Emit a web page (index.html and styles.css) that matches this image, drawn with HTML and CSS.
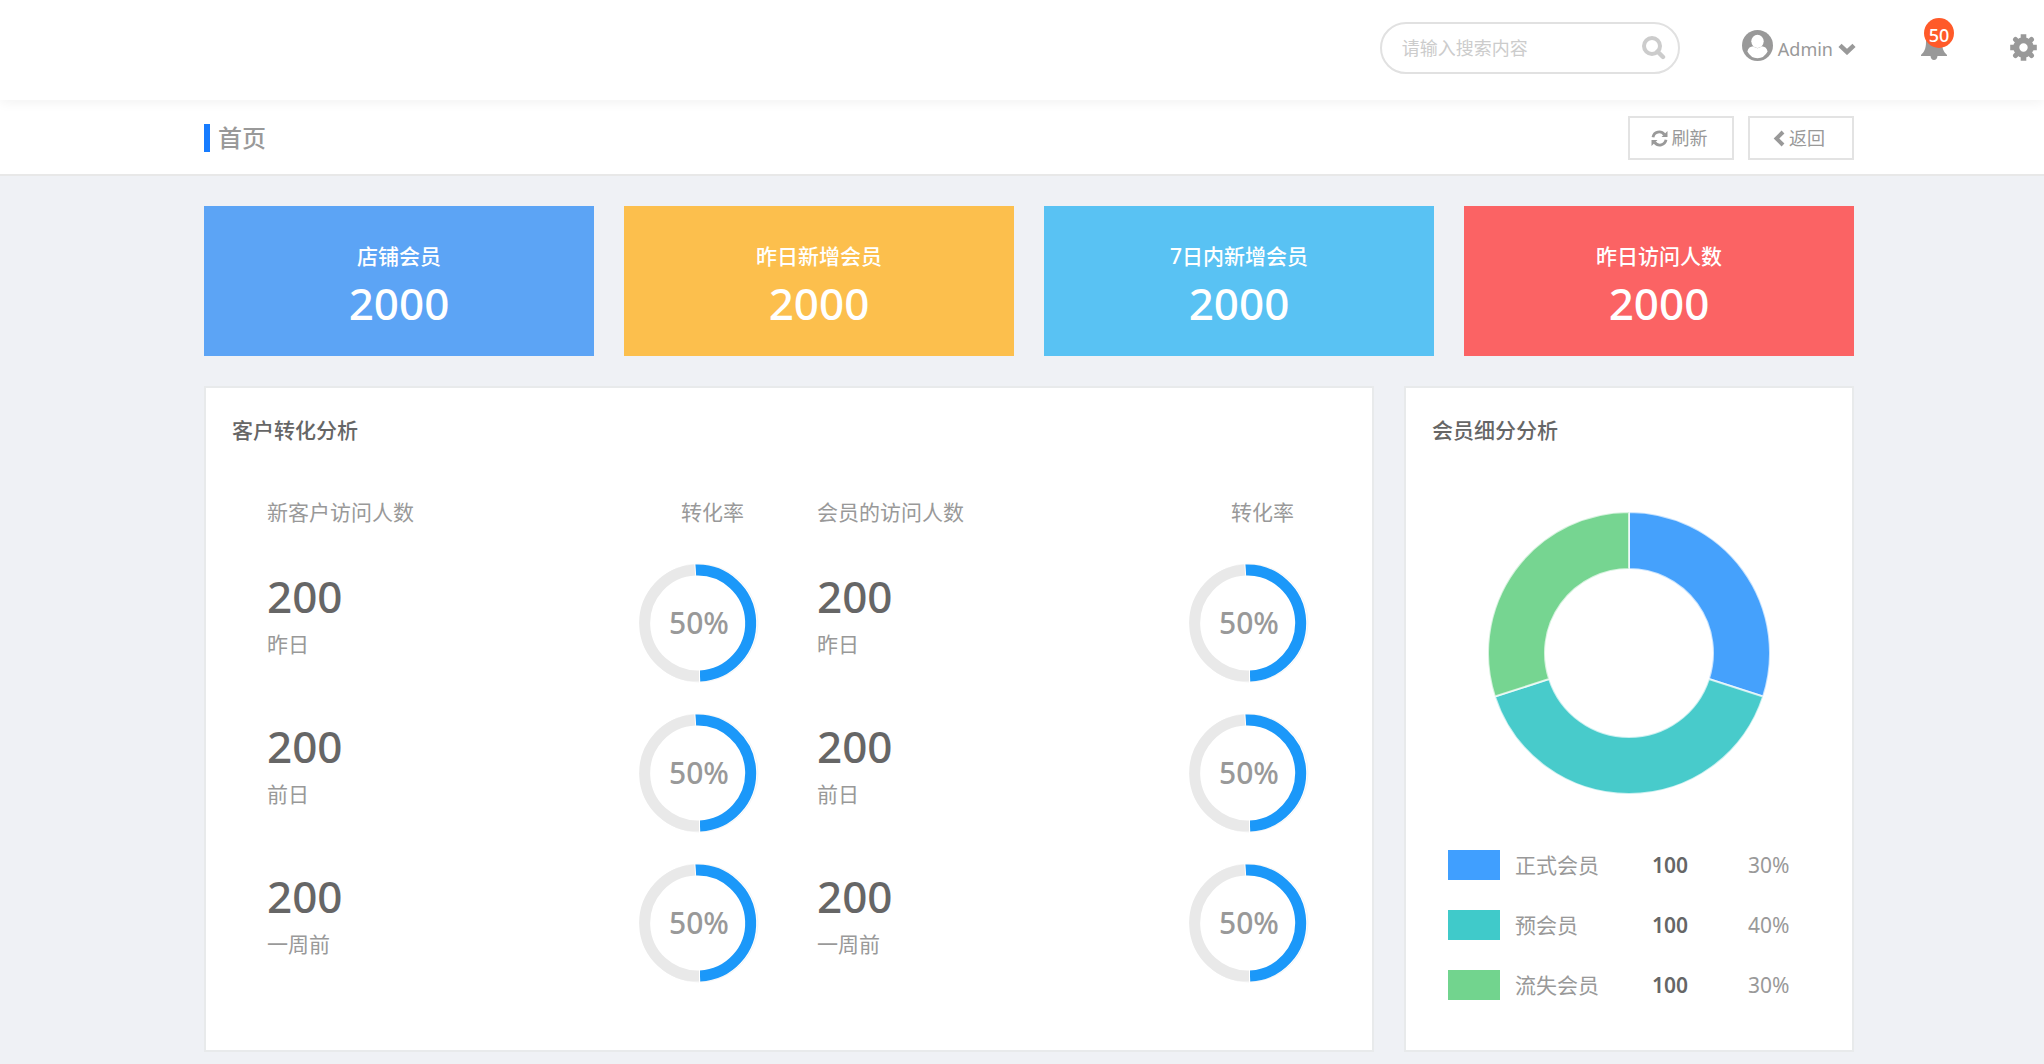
FILE: index.html
```html
<!DOCTYPE html>
<html lang="zh-CN">
<head>
<meta charset="utf-8">
<title>首页</title>
<link rel="stylesheet" href="styles.css">
</head>
<body>
<svg class="defs" aria-hidden="true">
  <symbol id="ring" viewBox="0 0 120 120">
    <circle cx="60" cy="60" r="59" fill="none" stroke="#f5f5f5" stroke-width="1"/>
    <path d="M61 113A53 53 0 0 1 56.300 7.100" fill="none" stroke="#e9e9e9" stroke-width="11"/>
    <path d="M56.300 7.100A53 53 0 1 1 61 113" fill="none" stroke="#1b98f9" stroke-width="11"/>
    <path d="M55.800 0.500L56.700 13M60.500 107V120" stroke="#fff" stroke-width="1"/>
  </symbol>
</svg>
<header class="topbar">
  <form class="search" role="search">
    <input class="search-input" type="search" placeholder="请输入搜索内容" aria-label="搜索">
    <button class="icon-button" type="button" aria-label="搜索">
      <svg width="24" height="24" viewBox="0 0 24 24" fill="none" stroke="#ccc"><circle cx="10" cy="10" r="8" stroke-width="4"/><path d="M15.500 15.500L21 21" stroke-width="4.400" stroke-linecap="round"/></svg>
    </button>
  </form>
  <button class="icon-button user" type="button">
    <svg class="avatar" width="31" height="31" viewBox="0 0 31 31"><circle cx="15.500" cy="15.500" r="15.500" fill="#999"/><path d="M5.400 21.500C6 18 8.500 16.300 11.300 16.200Q15.500 20.300 19.700 16.200C22.500 16.300 25 18 25.600 21.500Q22 28.300 15.500 28.300T5.400 21.500Z" fill="#fff"/><ellipse cx="15.500" cy="11.300" rx="6.200" ry="6.600" fill="#fff"/></svg>
    <span>Admin</span>
    <svg width="18" height="12" viewBox="0 0 18 12" fill="none" stroke="#999" stroke-width="4.500"><path d="M2 2.300L9 9L16 2.300"/></svg>
  </button>
  <button class="icon-button bell" type="button" aria-label="通知">
    <svg width="26" height="30" viewBox="0 0 26 30" fill="#999"><path d="M13 2C7 2 5 7 5 12C5 19 3 22 0 25V26H9.500Q10 30 13 30T16.500 26H26V25C23 22 21 19 21 12C21 7 19 2 13 2Z"/></svg>
    <span class="badge">50</span>
  </button>
  <button class="icon-button gear" type="button" aria-label="设置">
    <svg width="27" height="27" viewBox="-13.500 -13.500 27 27"><g stroke="#999" stroke-width="5.600"><path d="M0-13.300V-7M0 13.300V7M-13.300 0H-7M13.300 0H7"/><path d="M-8-8L-5-5M8 8L5 5M-8 8L-5 5M8-8L5-5" stroke-linecap="round" stroke-width="5"/></g><circle r="7.200" fill="none" stroke="#999" stroke-width="6"/></svg>
  </button>
</header>
<div class="pagebar">
  <h1 class="page-title">首页</h1>
  <div class="actions">
    <button class="action" type="button">
      <svg width="17" height="17" viewBox="0 0 17 17" fill="none" stroke="#999" stroke-width="2.800"><path d="M2 7.200A6.300 6.300 0 0 1 13.300 4.600M15 9.800A6.300 6.300 0 0 1 3.700 12.400"/><path d="M16.500 1V7H10.500ZM.500 16V10H6.500Z" fill="#999" stroke="none"/></svg>
      刷新
    </button>
    <button class="action" type="button">
      <svg width="12" height="17" viewBox="0 0 12 17" fill="none" stroke="#999" stroke-width="4"><path d="M10 2L3.500 8.500L10 15"/></svg>
      返回
    </button>
  </div>
</div>
<main class="content">
  <section class="cards">
    <div class="card blue"><span>店铺会员</span><strong>2000</strong></div>
    <div class="card orange"><span>昨日新增会员</span><strong>2000</strong></div>
    <div class="card cyan"><span>7日内新增会员</span><strong>2000</strong></div>
    <div class="card red"><span>昨日访问人数</span><strong>2000</strong></div>
  </section>
  <div class="panels">
    <section class="panel">
      <h2 class="panel-title">客户转化分析</h2>
      <div class="groups">
        <div class="group">
          <div class="group-head"><span>新客户访问人数</span><span class="rate">转化率</span></div>
          <div class="stat"><div><strong>200</strong><span>昨日</span></div><div class="ring"><svg><use href="#ring"/></svg><span>50%</span></div></div>
          <div class="stat"><div><strong>200</strong><span>前日</span></div><div class="ring"><svg><use href="#ring"/></svg><span>50%</span></div></div>
          <div class="stat"><div><strong>200</strong><span>一周前</span></div><div class="ring"><svg><use href="#ring"/></svg><span>50%</span></div></div>
        </div>
        <div class="group">
          <div class="group-head"><span>会员的访问人数</span><span class="rate">转化率</span></div>
          <div class="stat"><div><strong>200</strong><span>昨日</span></div><div class="ring"><svg><use href="#ring"/></svg><span>50%</span></div></div>
          <div class="stat"><div><strong>200</strong><span>前日</span></div><div class="ring"><svg><use href="#ring"/></svg><span>50%</span></div></div>
          <div class="stat"><div><strong>200</strong><span>一周前</span></div><div class="ring"><svg><use href="#ring"/></svg><span>50%</span></div></div>
        </div>
      </div>
    </section>
    <section class="panel">
      <h2 class="panel-title">会员细分分析</h2>
      <svg class="donut" width="282" height="282" viewBox="-141 -141 282 282">
        <g stroke="#fff" stroke-opacity=".7" stroke-width="2">
          <path fill="#45a1fc" d="M0-141A141 141 0 0 1 134.100 43.570L79.890 25.960A84 84 0 0 0 0-84Z"/>
          <path fill="#48cbcb" d="M134.100 43.570A141 141 0 0 1-134.100 43.570L-79.890 25.960A84 84 0 0 0 79.890 25.960Z"/>
          <path fill="#76d591" d="M-134.100 43.570A141 141 0 0 1 0-141V-84A84 84 0 0 0-79.890 25.960Z"/>
        </g>
      </svg>
      <table class="legend">
        <tbody>
          <tr><td class="key"><i class="swatch s1"></i></td><th scope="row">正式会员</th><td class="count">100</td><td class="pct">30%</td></tr>
          <tr><td class="key"><i class="swatch s2"></i></td><th scope="row">预会员</th><td class="count">100</td><td class="pct">40%</td></tr>
          <tr><td class="key"><i class="swatch s3"></i></td><th scope="row">流失会员</th><td class="count">100</td><td class="pct">30%</td></tr>
        </tbody>
      </table>
    </section>
  </div>
</main>
</body>
</html>
```

FILE: styles.css
```css
* { box-sizing: border-box; }

body {
  margin: 0;
  background: #eff1f5;
  color: #999;
  font: 21px/30px "Noto Sans", "Noto Sans CJK SC", sans-serif;
}

button, input { font: inherit; color: inherit; }
svg { display: block; flex: none; }
.defs { display: none; }

.topbar {
  position: relative;
  display: flex;
  align-items: flex-start;
  justify-content: flex-end;
  height: 100px;
  padding: 22px 7px 0 0;
  background: #fff;
  box-shadow: 0 2px 12px rgba(0, 0, 0, .06);
}

.icon-button {
  display: flex;
  align-items: center;
  padding: 0;
  border: 0;
  background: none;
}

.search {
  display: flex;
  align-items: center;
  width: 300px;
  height: 52px;
  padding: 0 12px 0 20px;
  border: 2px solid #e1e1e1;
  border-radius: 26px;
}

.search-input {
  flex: 1;
  min-width: 0;
  padding: 0;
  border: 0;
  outline: 0;
  background: none;
  font-size: 18px;
}
.search-input::placeholder { color: #ccc; }

.user {
  gap: 5px;
  height: 54px;
  margin-left: 62px;
  font-size: 18px;
}
.user .avatar { margin-bottom: 8px; }

.bell { position: relative; margin: 8px 63px 0 65px; }
.badge {
  position: absolute;
  left: 3px;
  top: -12px;
  width: 30px;
  height: 30px;
  border-radius: 50%;
  background: #ff5a29;
  color: #fff;
  font-size: 18px;
  font-weight: 500;
  line-height: 34px;
  text-align: center;
}
.gear { margin-top: 12px; }

.pagebar {
  display: flex;
  align-items: center;
  justify-content: space-between;
  height: 76px;
  padding: 2px 190px 0 204px;
  border-bottom: 2px solid #e8e8e8;
  background: #fff;
}

.page-title {
  margin: 0;
  padding-left: 8px;
  border-left: 6px solid #177cff;
  font-size: 24px;
  font-weight: 500;
  line-height: 28px;
}

.actions { display: flex; gap: 14px; }
.action {
  display: flex;
  align-items: center;
  justify-content: center;
  gap: 4px;
  width: 106px;
  height: 44px;
  padding: 0 4px 0 0;
  border: 2px solid #e3e3e3;
  background: #fff;
  font-size: 18px;
}

.content { padding: 30px 190px 12px 204px; }

.cards {
  display: grid;
  grid-template-columns: repeat(4, 1fr);
  gap: 30px;
  margin-bottom: 30px;
}
.card {
  display: flex;
  flex-direction: column;
  align-items: center;
  height: 150px;
  padding-top: 35px;
  color: #fff;
  font-weight: 500;
}
.card strong { font-size: 44px; font-weight: 500; line-height: 64px; }
.blue { background: #5ca4f5; }
.orange { background: #fcbf4d; }
.cyan { background: #59c2f3; }
.red { background: #fb6364; }

.panels {
  display: grid;
  grid-template-columns: 1fr 450px;
  gap: 30px;
}
.panel {
  min-height: 666px;
  padding: 27px 0 0 26px;
  border: 2px solid #e8eaeb;
  background: #fff;
}
.panel-title {
  margin: 0;
  color: #666;
  font-size: 21px;
  font-weight: 500;
  line-height: 30px;
}

.groups {
  display: grid;
  grid-template-columns: 1fr 1fr;
  padding: 52px 5px 0 35px;
}
.group-head {
  display: flex;
  justify-content: space-between;
  padding-right: 73px;
}
.stat {
  display: flex;
  justify-content: space-between;
  height: 150px;
  padding: 36px 58px 0 0;
}
.stat strong {
  display: block;
  color: #666;
  font-size: 44px;
  font-weight: 500;
  line-height: 66px;
}
.ring {
  display: grid;
  place-items: center;
  width: 120px;
  height: 120px;
  font-size: 30px;
  font-weight: 500;
}
.ring > * { grid-area: 1 / 1; }
.ring svg { width: 120px; height: 120px; }

.donut { margin: 67px auto 0 56px; }

.legend {
  width: 360px;
  margin: 41px 0 0 16px;
  border-collapse: collapse;
}
.legend tr { height: 60px; }
.legend td, .legend th { padding: 0; text-align: left; font-weight: 400; }
.legend .key { width: 67px; }
.legend th { width: 137px; }
.legend .count { width: 96px; color: #666; font-weight: 600; }
.swatch { display: block; width: 52px; height: 30px; }
.s1 { background: #409fff; }
.s2 { background: #40caca; }
.s3 { background: #72d48e; }
```
